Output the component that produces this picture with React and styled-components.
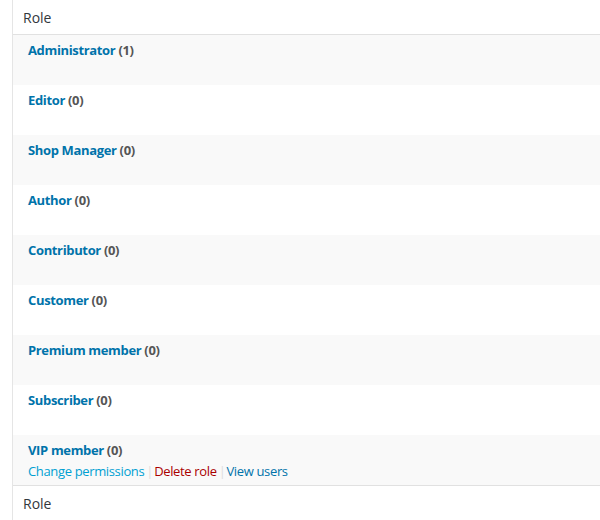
import styled, { createGlobalStyle } from 'styled-components';

const GlobalStyle = createGlobalStyle`
body {
  margin: 0;
  background: #ffffff;
  font-family: "Open Sans", "Noto Sans", sans-serif;
  font-size: 13px;
  color: #32373c;
  overflow: hidden;
}
`

const Page = styled.div`
width: 600px;
height: 520px;
overflow: hidden;
padding-left: 12px;
`

const Table = styled.div`
width: 620px;
border-left: 1px solid #e5e5e5;
`

const HeadCell = styled.div`
height: 34px;
display: flex;
align-items: center;
padding-left: 10px;
font-size: 14px;
color: #32373c;
border-${(p) => p.$side}: 1px solid #e1e1e1;
`

const Row = styled.div`
height: 50px;
box-sizing: border-box;
padding: 6px 15px 0;
letter-spacing: -0.35px;
background-color: ${(p) => (p.$alt ? '#f9f9f9' : '#ffffff')};
`

const Title = styled.div`
font-weight: 700;
line-height: 18px;
color: #555555;
`

const RoleLink = styled.a`
color: #0073aa;
text-decoration: none;
`

const Actions = styled.div`
margin-top: 3px;
line-height: 19px;
visibility: ${(p) => (p.$show ? 'visible' : 'hidden')};
`

const Action = styled.a`
color: ${(p) => p.$color};
text-decoration: none;
`

const Sep = styled.span`
color: #dddddd;
padding: 0 1px 0 2px;
`

const roles = [
  ['Administrator', 1],
  ['Editor', 0],
  ['Shop Manager', 0],
  ['Author', 0],
  ['Contributor', 0],
  ['Customer', 0],
  ['Premium member', 0],
  ['Subscriber', 0],
  ['VIP member', 0],
];

export default function App() {
  return (
    <Page>
      <GlobalStyle />
      <Table>
        <HeadCell $side="bottom">Role</HeadCell>
        {roles.map(([name, count], i) => (
          <Row key={name} $alt={i % 2 === 0}>
            <Title>
              <RoleLink>{name}</RoleLink> ({count})
            </Title>
            <Actions $show={i === roles.length - 1}>
              <Action $color="#00a0d2">Change permissions</Action>
              <Sep>|</Sep>
              <Action $color="#a00">Delete role</Action>
              <Sep>|</Sep>
              <Action $color="#0073aa">View users</Action>
            </Actions>
          </Row>
        ))}
        <HeadCell $side="top">Role</HeadCell>
      </Table>
    </Page>
  );
}
